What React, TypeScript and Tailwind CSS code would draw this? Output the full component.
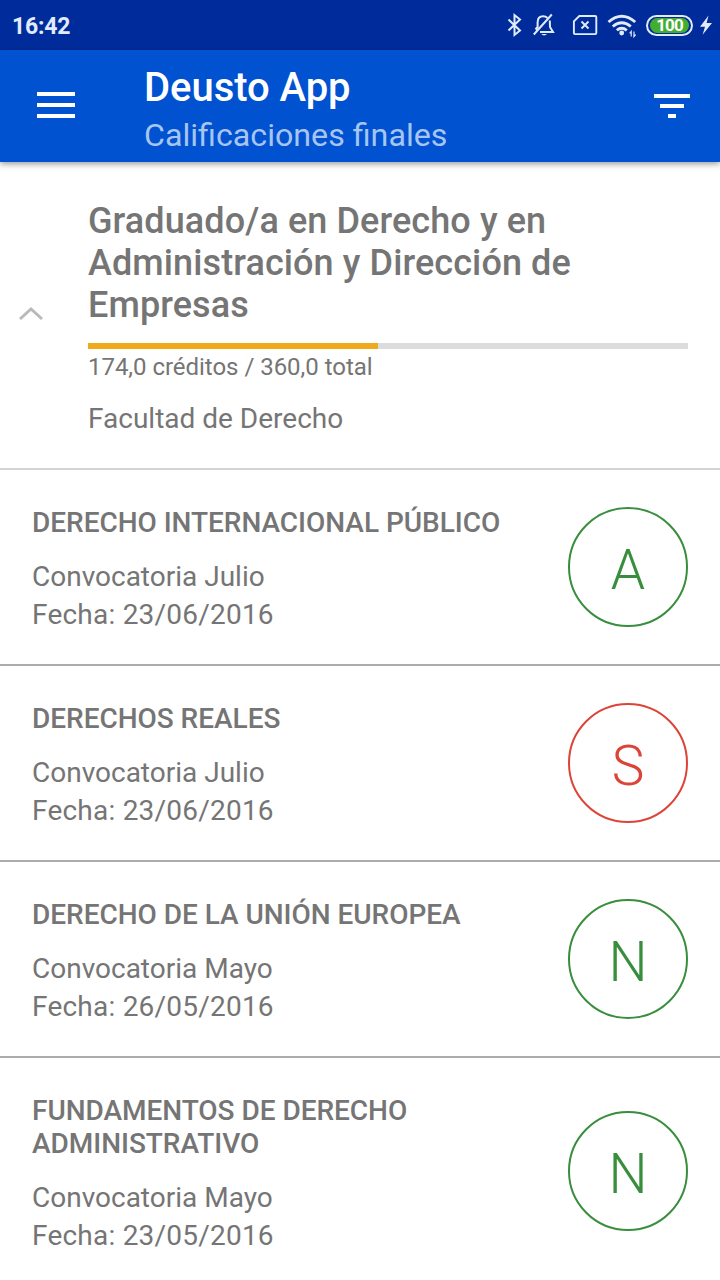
import React from "react";

type Grade = {
  name: string;
  call: string;
  date: string;
  mark: string;
  passed: boolean;
};

const grades: Grade[] = [
  { name: "DERECHO INTERNACIONAL PÚBLICO", call: "Julio", date: "23/06/2016", mark: "A", passed: true },
  { name: "DERECHOS REALES", call: "Julio", date: "23/06/2016", mark: "S", passed: false },
  { name: "DERECHO DE LA UNIÓN EUROPEA", call: "Mayo", date: "26/05/2016", mark: "N", passed: true },
  { name: "FUNDAMENTOS DE DERECHO ADMINISTRATIVO", call: "Mayo", date: "23/05/2016", mark: "N", passed: true },
];

function StatusIcons() {
  return (
    <div className="flex h-[50px] items-center text-[#e1ebfb]">
      <svg className="h-[50px] w-[18px]" viewBox="506 0 18 50" fill="none" stroke="currentColor" strokeWidth="2">
        <path d="M508.5 19.5 520 30.5 514.5 35V15L520 19.5 508.5 30.5" />
      </svg>
      <svg className="ml-[8px] h-[50px] w-6" viewBox="532 0 24 50" fill="none" stroke="currentColor" strokeWidth="2">
        <path d="M551.8 14.5 533.8 34.5M535.5 29.5 537.6 27V22.5C537.6 18.5 540 16.3 543.2 16.3 545 16.3 546.2 16.8 547.3 17.8M549.8 20.5 550 27 553 32H540" />
        <path d="M541.2 34H547Q544.1 36.8 541.2 34Z" fill="currentColor" stroke="none" />
      </svg>
      <svg className="ml-[16px] h-[50px] w-[26px]" viewBox="572 0 26 50" fill="none" stroke="currentColor" strokeWidth="1.9">
        <path d="M579.3 16H595.2Q596.3 16 596.3 17.1V33Q596.3 34.1 595.2 34.1H575Q573.9 34.1 573.9 33V21.4ZM581.5 21.5 588.5 28.5M588.5 21.5 581.5 28.5" />
      </svg>
      <svg className="ml-[9px] h-[50px] w-[30px]" viewBox="607 0 30 50" fill="none" stroke="currentColor">
        <g strokeWidth="2.8">
          <path d="M608.5 22Q621.7 10.5 635.2 22" />
          <path d="M612.8 26.5Q621.7 19 630.8 26.5" />
          <path d="M616.8 30.3Q621.7 26.2 626.8 30.3" />
        </g>
        <circle cx="621.7" cy="33" r="2.4" fill="currentColor" stroke="none" />
        <path d="M631.2 36.5V31.5L629.7 33.3M634 31.5V36.5L635.6 34.6" strokeWidth="1.2" />
      </svg>
      <div className="ml-[9px] flex h-[21px] w-[47px] items-center justify-center rounded-full border-2 border-current p-[2px]">
        <div className="flex h-[15px] w-full items-center justify-center rounded-full bg-[#43ad30] text-[17px] leading-none font-bold tracking-[-0.9px] text-white">100</div>
      </div>
      <svg className="ml-[6px] h-[50px] w-[14px]" viewBox="699 0 14 50">
        <path d="M708.5 15.5 700 26.7H705L702.6 34.7 712 23H706.6Z" fill="currentColor" />
      </svg>
    </div>
  );
}

function GradeRow({ grade }: { grade: Grade }) {
  return (
    <li className="flex items-start justify-between border-b-2 border-[#acacac] px-8">
      <div className="w-[500px] pt-9 pb-[30px] text-[28px]">
        <h2 className="font-medium leading-[33px] tracking-[-0.03px]">{grade.name}</h2>
        <p className="mt-[19px] leading-[38px]">Convocatoria {grade.call}</p>
        <p className="leading-[38px] tracking-[0.22px]">Fecha: {grade.date}</p>
      </div>
      <div
        className={`mb-px flex size-[120px] shrink-0 items-center justify-center self-center rounded-full border-2 pt-[7px] text-[55px] leading-none font-light ${
          grade.passed ? "border-[#388e3c] text-[#388e3c]" : "border-[#dc4437] text-[#dc4437]"
        }`}
      >
        {grade.mark}
      </div>
    </li>
  );
}

export default function App() {
  return (
    <div className="flex h-[1280px] w-[720px] flex-col overflow-hidden bg-white font-['Roboto',sans-serif] text-[#757575]">
      <div className="flex h-[50px] shrink-0 items-center justify-between bg-[#002c9b] pr-[7px] pl-3">
        <span className="pt-[2px] text-[23px] leading-none font-bold text-[#e1ebfb] tracking-[-0.2px]">16:42</span>
        <StatusIcons />
      </div>
      <header className="z-10 flex h-28 shrink-0 items-start bg-[#0052d0] shadow-[0_2px_6px_rgba(0,0,0,0.4)]">
        <button aria-label="Menú" className="ml-[37px] mt-[42px] flex w-[38px] flex-col gap-[7px]">
          <span className="h-1 bg-white" />
          <span className="h-1 bg-white" />
          <span className="h-1 bg-white" />
        </button>
        <div className="ml-[69px] flex-1 pt-[14px]">
          <h1 className="text-[40px] leading-[47px] font-medium tracking-[-0.05px] text-white">Deusto App</h1>
          <p className="text-[32.2px] leading-[48px] text-[#a6c5f0]">Calificaciones finales</p>
        </div>
        <button aria-label="Filtrar" className="mr-[30px] mt-[44px] flex w-9 flex-col items-center gap-[6px]">
          <span className="h-1 w-9 bg-white" />
          <span className="h-1 w-6 bg-white" />
          <span className="h-1 w-2 bg-white" />
        </button>
      </header>
      <main>
        <section className="flex h-[308px] items-start border-b-2 border-[#d3d3d3] pr-8">
          <svg className="mt-[143px] ml-[18px] h-4 w-[26px] shrink-0" viewBox="0 0 26 16" fill="none" stroke="#b9b9b9" strokeWidth="3">
            <path d="M2 14 13 4 24 14" />
          </svg>
          <div className="ml-11 w-[600px] pt-[38px]">
            <h2 className="text-[36px] leading-[42px] font-medium tracking-[0.1px]">Graduado/a en Derecho y en Administración y Dirección de Empresas</h2>
            <div className="mt-[17px] flex h-[6px] bg-[#dcdcdc]">
              <div className="w-[290px] bg-[#f0ab1c]" />
            </div>
            <p className="mt-1 text-[24px] leading-7 tracking-[-0.03px]">174,0 créditos / 360,0 total</p>
            <p className="mt-[21px] text-[28px] leading-[33px]">Facultad de Derecho</p>
          </div>
        </section>
        <ul>
          {grades.map((grade) => (
            <GradeRow key={grade.name} grade={grade} />
          ))}
        </ul>
      </main>
    </div>
  );
}
